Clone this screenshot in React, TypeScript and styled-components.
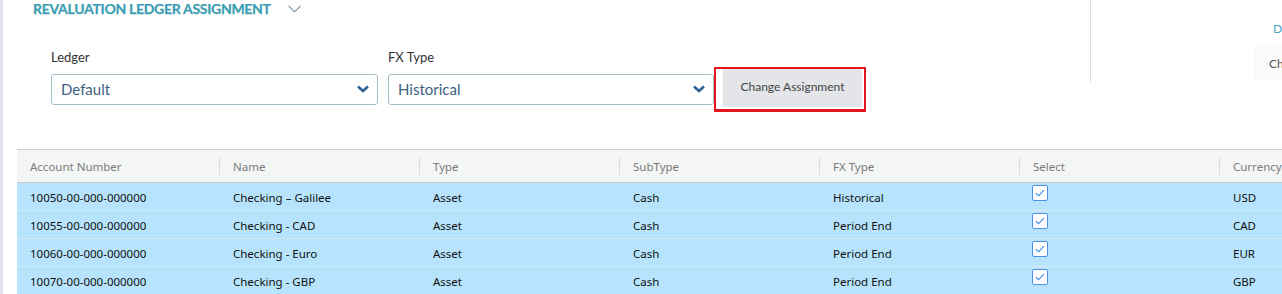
import styled, { createGlobalStyle } from 'styled-components'

const GlobalStyle = createGlobalStyle`
    html, body {
        margin: 0;
        padding: 0;
        background: #ffffff;
    }
`

const Page = styled.div`
    width: 1282px;
    height: 294px;
    overflow: hidden;
    box-sizing: border-box;
    border-left: 3px solid #dfe3ea;
    background: #ffffff;
`

const Top = styled.div`
    display: flex;
    height: 149px;
`

const MainSection = styled.div`
    width: 1088px;
    border-right: 1px solid #dcdce6;
    height: 82px;
    box-sizing: border-box;
    flex-shrink: 0;
`

const TitleRow = styled.div`
    display: flex;
    align-items: center;
    gap: 17px;
    padding-left: 30px;
    height: 17px;
`

const Title = styled.div`
    font-family: Lato, "Open Sans", sans-serif;
    font-weight: 700;
    font-size: 14px;
    color: #3a9db2;
    letter-spacing: -0.3px;
    -webkit-text-stroke: 0.25px #3a9db2;
`

const FormRow = styled.div`
    display: flex;
    align-items: flex-start;
    padding-left: 48px;
    margin-top: 32px;
`

const Field = styled.div<{ gap: number }>`
    display: flex;
    flex-direction: column;
    margin-right: ${p => p.gap}px;
`

const Label = styled.label`
    font-family: Lato, "Open Sans", sans-serif;
    font-size: 13px;
    color: #333333;
    height: 17px;
    line-height: 17px;
    margin-bottom: 8px;
`

const SelectBox = styled.div<{ w: number }>`
    display: flex;
    align-items: center;
    justify-content: space-between;
    width: ${p => p.w}px;
    height: 31px;
    box-sizing: border-box;
    border: 1px solid #a7bdca;
    border-radius: 3px;
    padding: 0 8px 1px 9px;
    font-family: Lato, "Open Sans", sans-serif;
    font-size: 15px;
    color: #3f5f7f;
`

const Highlight = styled.div`
    margin-top: 18px;
    width: 152px;
    height: 45px;
    box-sizing: border-box;
    border: 2px solid #e3161e;
    border-bottom-width: 3px;
    padding: 0 0 0 7px;
`

const Button = styled.button`
    width: 139px;
    height: 37px;
    border: none;
    border-radius: 3px;
    background: #e3e5e9;
    box-shadow: 0 1px 2px rgba(0, 0, 0, 0.12);
    font-family: Lato, "Open Sans", sans-serif;
    font-size: 12px;
    color: #444444;
    padding: 0 0 3px 0;
    text-align: center;
`

const SidePanel = styled.div`
    flex: 1;
    display: flex;
    flex-direction: column;
    align-items: flex-end;
`

const SideLink = styled.div`
    font-family: Lato, "Open Sans", sans-serif;
    font-size: 12px;
    color: #4aa3c4;
    margin-top: 21px;
    width: 9px;
    overflow: hidden;
`

const SideBox = styled.div`
    margin-top: 9px;
    width: 29px;
    height: 36px;
    background: #fafafa;
    display: flex;
    align-items: center;
    padding-left: 16px;
    box-sizing: border-box;
    font-family: Lato, "Open Sans", sans-serif;
    font-size: 12px;
    color: #555555;
    overflow: hidden;
    white-space: nowrap;
`

const Table = styled.div`
    margin-left: 14px;
    border-top: 1px solid #cfcfcf;
`

const cols = '203px 200px 200px 200px 200px 200px 200px'

const HeaderRow = styled.div`
    display: grid;
    grid-template-columns: ${cols};
    height: 32px;
    background: #f4f5f5;
    border-bottom: 1px solid #c9cdd0;
`

const HeaderCell = styled.div<{ last?: boolean }>`
    display: flex;
    align-items: center;
    padding-left: 13px;
    font-family: "Noto Sans", "Open Sans", sans-serif;
    font-size: 11.5px;
    color: #7a7a7a;
    position: relative;
    white-space: nowrap;
    &::after {
        content: '';
        display: ${p => (p.last ? 'none' : 'block')};
        position: absolute;
        right: 0;
        top: 8px;
        height: 17px;
        width: 1px;
        background: #dadada;
    }
`

const Row = styled.div`
    display: grid;
    grid-template-columns: ${cols};
    height: 27px;
    background: #b7e4fc;
    border-bottom: 1px solid #d3e9f5;
`

const Cell = styled.div`
    display: flex;
    align-items: center;
    padding: 2px 0 0 13px;
    font-family: "Noto Sans", "Open Sans", sans-serif;
    font-size: 11.5px;
    color: #111111;
    white-space: nowrap;
`

const CheckCell = styled.div`
    padding-left: 12px;
    padding-top: 2px;
`

const Check = styled.div`
    width: 14px;
    height: 14px;
    border: 1px solid #4f8fe6;
    border-radius: 2px;
    background: #ffffff;
    display: flex;
    align-items: center;
    justify-content: center;
`

const ChevronDown = () => (
    <svg width="12" height="8" viewBox="0 0 12 8">
        <path d="M1 1.5 L6 6 L11 1.5" fill="none" stroke="#2f6195" strokeWidth="2.6" />
    </svg>
)

const TitleChevron = () => (
    <svg width="13" height="8" viewBox="0 0 13 8">
        <path d="M0.5 0.8 L6.5 6.8 L12.5 0.8" fill="none" stroke="#6f8fa8" strokeWidth="1.1" />
    </svg>
)

const Tick = () => (
    <svg width="10" height="8" viewBox="0 0 10 8">
        <path d="M1 4.2 L3.6 6.6 L9 1.2" fill="none" stroke="#4f8fe6" strokeWidth="1.2" />
    </svg>
)

const rows = [
    { acc: '10050-00-000-000000', name: 'Checking \u2013 Galilee', fx: 'Historical', cur: 'USD' },
    { acc: '10055-00-000-000000', name: 'Checking - CAD', fx: 'Period End', cur: 'CAD' },
    { acc: '10060-00-000-000000', name: 'Checking - Euro', fx: 'Period End', cur: 'EUR' },
    { acc: '10070-00-000-000000', name: 'Checking - GBP', fx: 'Period End', cur: 'GBP' },
]

const headers = ['Account Number', 'Name', 'Type', 'SubType', 'FX Type', 'Select', 'Currency']

export default function App() {
    return (
        <>
            <GlobalStyle />
            <Page>
                <Top>
                    <MainSection>
                        <TitleRow>
                            <Title>REVALUATION LEDGER ASSIGNMENT</Title>
                            <TitleChevron />
                        </TitleRow>
                        <FormRow>
                            <Field gap={10}>
                                <Label>Ledger</Label>
                                <SelectBox w={327}>
                                    <span>Default</span>
                                    <ChevronDown />
                                </SelectBox>
                            </Field>
                            <Field gap={0}>
                                <Label>FX Type</Label>
                                <SelectBox w={326}>
                                    <span>Historical</span>
                                    <ChevronDown />
                                </SelectBox>
                            </Field>
                            <Highlight>
                                <Button>Change Assignment</Button>
                            </Highlight>
                        </FormRow>
                    </MainSection>
                    <SidePanel>
                        <SideLink>D</SideLink>
                        <SideBox>Ch</SideBox>
                    </SidePanel>
                </Top>
                <Table>
                    <HeaderRow>
                        {headers.map((h, i) => (
                            <HeaderCell key={h} last={i === headers.length - 1}>{h}</HeaderCell>
                        ))}
                    </HeaderRow>
                    {rows.map(r => (
                        <Row key={r.acc}>
                            <Cell>{r.acc}</Cell>
                            <Cell>{r.name}</Cell>
                            <Cell>Asset</Cell>
                            <Cell>Cash</Cell>
                            <Cell>{r.fx}</Cell>
                            <CheckCell>
                                <Check><Tick /></Check>
                            </CheckCell>
                            <Cell>{r.cur}</Cell>
                        </Row>
                    ))}
                </Table>
            </Page>
        </>
    )
}
